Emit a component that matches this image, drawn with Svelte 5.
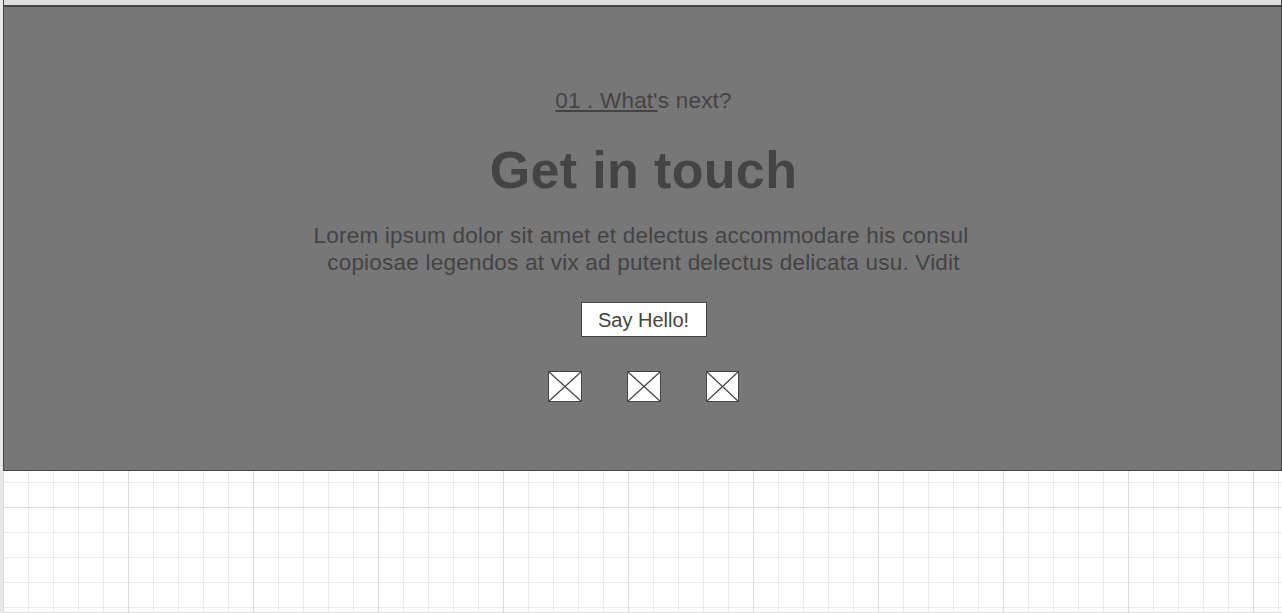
<script>
  const socials = ['first', 'second', 'third'];
  const lines = [
    'Lorem ipsum dolor sit amet et delectus accommodare his consul',
    'copiosae legendos at vix ad putent delectus delicata usu. Vidit'
  ];
</script>

<main class="canvas">
  <div class="previous"></div>
  <section class="contact">
    <p class="eyebrow"><span class="underlined">01 . What'</span>s next?</p>
    <h1>Get in touch</h1>
    <div class="copy">
      {#each lines as line, i}
        <p class:second={i === 1}>{line}</p>
      {/each}
    </div>
    <button>Say Hello!</button>
    <div class="socials">
      {#each socials as name, i (name)}
        <svg width={i === 2 ? 33 : 34} height="31" viewBox="0 0 34 31" preserveAspectRatio="none">
          <rect x="0.5" y="0.5" width="33" height="30" fill="#fff" />
          <path d="M.5 .5 33.5 30.5M33.5 .5 .5 30.5" />
        </svg>
      {/each}
    </div>
  </section>
  <div class="grid"></div>
</main>

<style>
  :global(body) {
    margin: 0;
    overflow: hidden;
  }
  .canvas {
    box-sizing: border-box;
    width: 1282px;
    height: 613px;
    display: flex;
    flex-direction: column;
    border-left: 3px solid #e8e8e8;
    background: #fff;
    font-family: 'Liberation Sans', Arial, sans-serif;
    color: #444;
  }
  .previous {
    box-sizing: border-box;
    height: 5px;
    flex: none;
    background: #dedede;
    border-left: 1px solid #444;
    border-right: 1px solid #444;
  }
  .contact {
    box-sizing: border-box;
    height: 466px;
    flex: none;
    display: flex;
    flex-direction: column;
    align-items: center;
    background: #777;
    border: 1px solid #444;
    border-top-width: 2px;
    padding: 80px 0 0 2px;
  }
  p,
  h1 {
    margin: 0;
    white-space: nowrap;
  }
  .eyebrow {
    height: 27px;
    line-height: 27px;
    font-size: 22.5px;
    letter-spacing: 0.2px;
  }
  .underlined {
    text-decoration: underline;
    text-decoration-thickness: 2px;
    text-underline-offset: 2px;
    text-decoration-skip-ink: none;
  }
  h1 {
    margin-top: 26px;
    height: 60px;
    line-height: 60px;
    font-size: 52px;
    font-weight: 700;
    letter-spacing: 0.35px;
  }
  .copy {
    margin-top: 22px;
    display: flex;
    flex-direction: column;
    align-items: center;
    font-size: 22.5px;
    line-height: 27px;
    letter-spacing: 0.22px;
  }
  .copy p {
    margin-right: 5px;
  }
  .copy .second {
    margin-right: 0;
  }
  button {
    box-sizing: border-box;
    width: 126px;
    height: 35px;
    margin-top: 26px;
    padding: 1px 0 0;
    border: 1px solid #444;
    border-radius: 0;
    background: #fff;
    color: #444;
    font: 20px / 32px 'Liberation Sans', Arial, sans-serif;
  }
  .socials {
    display: flex;
    gap: 45px;
    margin-top: 34px;
  }
  svg {
    display: block;
    stroke: #444;
    stroke-width: 1;
  }
  svg path {
    fill: none;
    stroke-width: 1.2;
  }
  .grid {
    flex: 1;
    border-bottom: 1px solid #dadada;
    background-image:
      linear-gradient(#dcdcdc, #dcdcdc),
      linear-gradient(90deg, #dcdcdc 1px, transparent 1px),
      linear-gradient(90deg, #ebebeb 1px, transparent 1px),
      linear-gradient(#ebebeb 1px, transparent 1px);
    background-size:
      100% 1px,
      125px 100%,
      25px 25px,
      25px 25px;
    background-position:
      0 36px,
      0 0,
      0 0,
      0 11px;
    background-repeat: no-repeat, repeat, repeat, repeat;
  }
</style>
